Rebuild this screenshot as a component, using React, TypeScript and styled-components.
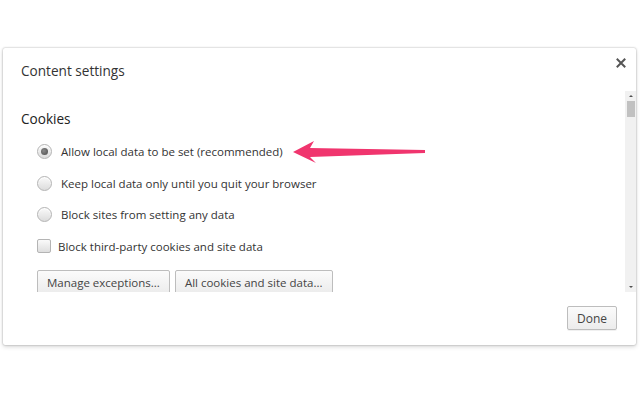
import React from "react";
import styled, {createGlobalStyle} from "styled-components";

const GlobalStyle = createGlobalStyle`
  html, body {
    margin: 0;
    padding: 0;
    background: #ffffff;
  }
  body {
    font-family: "Open Sans", "Noto Sans", Arial, sans-serif;
    color: #333333;
  }
`

const Page = styled.div`
  position: relative;
  width: 640px;
  height: 394px;
  overflow: hidden;
  padding-top: 48px;
  padding-left: 3px;
  box-sizing: border-box;
`

const Dialog = styled.div`
  position: relative;
  width: 633px;
  height: 297px;
  background: #ffffff;
  border-radius: 2px;
  box-shadow: 0 0 2px rgba(0, 0, 0, 0.35), 0 2px 4px rgba(0, 0, 0, 0.15);
  display: flex;
  flex-direction: column;
`

const Header = styled.div`
  height: 43px;
  box-sizing: border-box;
  padding: 13px 0 0 18px;
`

const Title = styled.h1`
  margin: 0;
  font-weight: 400;
  font-size: 13.6px;
  line-height: 20px;
  color: #333333;
`

const CloseButton = styled.button`
  position: absolute;
  top: 9px;
  right: 9px;
  width: 12px;
  height: 12px;
  padding: 0;
  border: 0;
  background: transparent;
  display: flex;
  align-items: center;
  justify-content: center;
  cursor: pointer;
`

const ScrollArea = styled.div`
  height: 201px;
  display: flex;
`

const Content = styled.div`
  flex: 1;
  overflow: hidden;
  padding: 18px 0 0 18px;
`

const SectionTitle = styled.h2`
  margin: 0 0 7px 0;
  font-weight: 400;
  font-size: 13.6px;
  line-height: 20px;
  color: #222222;
`

const OptionList = styled.div`
  padding-left: 16px;
  display: flex;
  flex-direction: column;
`

const Option = styled.label`
  height: 31.5px;
  display: flex;
  align-items: center;
  gap: 9px;
  font-size: 11.5px;
  color: #333333;
`

const Radio = styled.span<{checked?: boolean}>`
  position: relative;
  width: 13px;
  height: 13px;
  border-radius: 50%;
  border: 1px solid #b4b4b4;
  background: linear-gradient(#fafafa, #dcdcdc);
  box-shadow: inset 0 1px 1px #ffffff;
  flex-shrink: 0;

  &::after {
    content: "";
    display: ${props => props.checked ? "block" : "none"};
    position: absolute;
    left: 3px;
    top: 3px;
    width: 7px;
    height: 7px;
    border-radius: 50%;
    background: radial-gradient(circle at 40% 40%, #8a8a8a, #4a4a4a);
  }
`

const Checkbox = styled.span`
  width: 12px;
  height: 12px;
  border-radius: 2px;
  border: 1px solid #b4b4b4;
  background: linear-gradient(#fafafa, #dedede);
  flex-shrink: 0;
  margin-right: -2px;
`

const ButtonRow = styled.div`
  display: flex;
  gap: 5px;
  margin-top: 8px;
`

const Button = styled.button`
  height: 24px;
  padding: 0 9px;
  border: 1px solid #bdbdbd;
  border-radius: 2px;
  background: linear-gradient(#fbfbfb, #ececec);
  box-shadow: 0 1px 0 rgba(0, 0, 0, 0.06);
  font-family: "Open Sans", "Noto Sans", Arial, sans-serif;
  font-size: 11.5px;
  color: #444444;
  cursor: pointer;
`

const Scrollbar = styled.div`
  width: 11px;
  background: #f1f1f1;
  display: flex;
  flex-direction: column;
  align-items: center;
`

const ScrollArrow = styled.div<{down?: boolean}>`
  height: 10px;
  width: 100%;
  display: flex;
  align-items: center;
  justify-content: center;

  &::before {
    content: "";
    width: 0;
    height: 0;
    border-left: 2px solid transparent;
    border-right: 2px solid transparent;
    ${props => props.down ? "border-top: 2px solid #505050;" : "border-bottom: 2px solid #505050;"}
  }
`

const Thumb = styled.div`
  width: 8px;
  height: 16px;
  background: #c1c1c1;
`

const Track = styled.div`
  flex: 1;
`

const Footer = styled.div`
  flex: 1;
  display: flex;
  justify-content: flex-end;
  align-items: flex-start;
  padding: 14px 19px 0 0;
`

const DoneButton = styled(Button)`
  width: 50px;
  padding: 0;
  font-size: 12px;
`

const Annotation = styled.svg`
  position: absolute;
  left: 0;
  top: 0;
  pointer-events: none;
`

const radios = [
    {label: "Allow local data to be set (recommended)", checked: true},
    {label: "Keep local data only until you quit your browser", checked: false},
    {label: "Block sites from setting any data", checked: false},
]

const App: React.FC = () => {
    return (
        <Page>
            <GlobalStyle/>
            <Dialog>
                <Header>
                    <Title>Content settings</Title>
                </Header>
                <CloseButton aria-label="Close">
                    <svg width="10" height="10" viewBox="0 0 10 10">
                        <path d="M1.5 1.5 L8.5 8.5 M8.5 1.5 L1.5 8.5" stroke="#555" strokeWidth="2" strokeLinecap="square"/>
                    </svg>
                </CloseButton>

                <ScrollArea>
                    <Content>
                        <SectionTitle>Cookies</SectionTitle>
                        <OptionList>
                            {radios.map(r => (
                                <Option key={r.label}>
                                    <Radio checked={r.checked}/>
                                    {r.label}
                                </Option>
                            ))}
                            <Option>
                                <Checkbox/>
                                Block third-party cookies and site data
                            </Option>
                            <ButtonRow>
                                <Button>Manage exceptions...</Button>
                                <Button>All cookies and site data...</Button>
                            </ButtonRow>
                        </OptionList>
                    </Content>
                    <Scrollbar>
                        <ScrollArrow/>
                        <Thumb/>
                        <Track/>
                        <ScrollArrow down/>
                    </Scrollbar>
                </ScrollArea>

                <Footer>
                    <DoneButton>Done</DoneButton>
                </Footer>
            </Dialog>

            <Annotation width="640" height="394" viewBox="0 0 640 394">
                <path d="M293 152 L314 141 L310 148 L425 150 L425 153 L310 157 L316 163 Z" fill="#f0356e"/>
            </Annotation>
        </Page>
    )
}

export default App;
